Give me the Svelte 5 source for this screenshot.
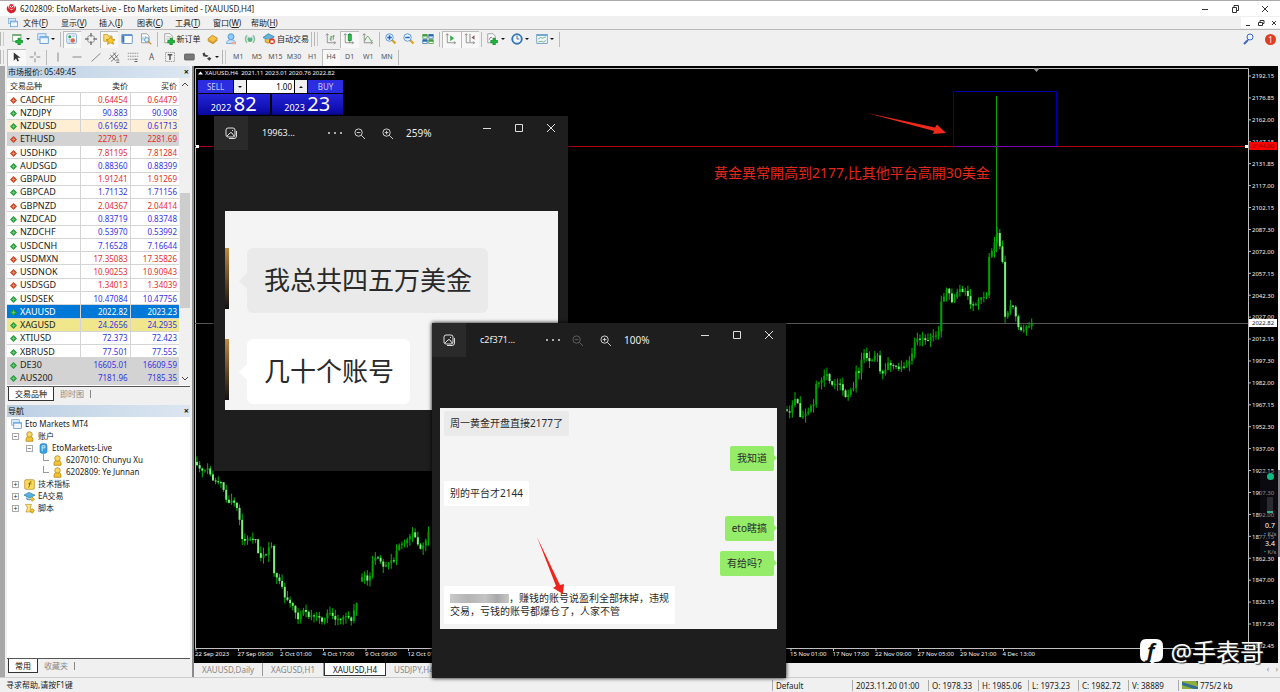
<script>
  // top menu: label and its access key
  const menus = [
    ["文件", "F"],
    ["显示", "V"],
    ["插入", "I"],
    ["图表", "C"],
    ["工具", "T"],
    ["窗口", "W"],
    ["帮助", "H"]
  ];

  // symbol, bid, ask, direction, row colour
  const quotes = [
    ["CADCHF", "0.64454", "0.64479", "down", ""],
    ["NZDJPY", "90.883", "90.908", "up", ""],
    ["NZDUSD", "0.61692", "0.61713", "up", "cream"],
    ["ETHUSD", "2279.17", "2281.69", "down", "grey"],
    ["USDHKD", "7.81195", "7.81284", "down", ""],
    ["AUDSGD", "0.88360", "0.88399", "up", ""],
    ["GBPAUD", "1.91241", "1.91269", "down", ""],
    ["GBPCAD", "1.71132", "1.71156", "up", ""],
    ["GBPNZD", "2.04367", "2.04414", "down", ""],
    ["NZDCAD", "0.83719", "0.83748", "up", ""],
    ["NZDCHF", "0.53970", "0.53992", "up", ""],
    ["USDCNH", "7.16528", "7.16644", "up", ""],
    ["USDMXN", "17.35083", "17.35826", "down", ""],
    ["USDNOK", "10.90253", "10.90943", "down", ""],
    ["USDSGD", "1.34013", "1.34039", "down", ""],
    ["USDSEK", "10.47084", "10.47756", "up", ""],
    ["XAUUSD", "2022.82", "2023.23", "up", "selected"],
    ["XAGUSD", "24.2656", "24.2935", "up", "khaki"],
    ["XTIUSD", "72.373", "72.423", "up", ""],
    ["XBRUSD", "77.501", "77.555", "up", ""],
    ["DE30", "16605.01", "16609.59", "up", "grey"],
    ["AUS200", "7181.96", "7185.35", "up", "grey"]
  ];

  const prices = [
    "2192.15", "2176.85", "2162.00", "2147.15", "2131.85", "2117.00", "2102.15",
    "2087.30", "2072.00", "2057.15", "2042.30", "2027.00", "2012.15", "1997.30",
    "1982.00", "1967.15", "1952.30", "1937.00", "1922.15", "1907.30", "1892.00",
    "1877.15", "1862.30", "1847.00", "1832.15", "1817.30", "1802.45"
  ];

  // slot on the time axis and its label
  const dates = [
    [0, "22 Sep 2023"],
    [1, "27 Sep 09:00"],
    [2, "2 Oct 01:00"],
    [3, "4 Oct 17:00"],
    [4, "9 Oct 09:00"],
    [5, "12 Oct 01:00"],
    [14, "15 Nov 01:00"],
    [15, "17 Nov 17:00"],
    [16, "22 Nov 09:00"],
    [17, "27 Nov 05:00"],
    [18, "29 Nov 21:00"],
    [19, "4 Dec 13:00"]
  ];

  // price path, split where the market gapped
  const runs = [
    [[196, 462], [200, 466], [205, 470], [211, 466], [213, 480], [223, 482], [229, 502], [235, 499], [240, 510], [244, 540], [249, 539], [257, 537], [261, 558], [268, 553], [273, 543], [276, 575], [282, 582], [287, 598], [293, 603], [300, 620], [306, 606], [310, 615], [320, 617], [325, 622], [330, 609], [338, 620], [347, 616], [353, 619], [357, 603], [359, 600]],
    [[361, 580], [365, 574], [370, 583], [374, 562], [378, 556], [385, 565], [390, 561], [397, 560], [399, 546], [408, 541], [415, 530], [421, 548], [426, 546], [429, 536], [432, 520]],
    [[786, 410], [792, 411], [796, 399], [799, 396], [800, 420], [805, 415], [809, 413], [812, 405], [815, 408], [817, 384], [822, 381], [830, 372], [832, 385], [842, 383], [848, 400], [851, 390], [855, 388], [857, 370], [862, 374], [864, 348], [867, 358], [873, 360], [880, 353], [882, 373], [886, 372], [890, 363], [897, 367], [907, 367], [913, 355], [917, 340], [923, 337], [927, 341], [933, 336], [940, 335], [943, 300], [949, 288], [954, 302], [960, 288], [968, 292], [972, 303], [977, 305], [982, 297], [989, 293], [991, 252], [995, 251], [998, 228], [1001, 245], [1004, 258], [1007, 320], [1013, 303], [1016, 308], [1021, 332], [1027, 327], [1034, 323]]
  ];

  function priceAt(run, x) {
    for (let i = 1; i < run.length; i++) {
      if (x <= run[i][0]) {
        const [x0, y0] = run[i - 1];
        const [x1, y1] = run[i];
        return y0 + ((y1 - y0) * (x - x0)) / (x1 - x0);
      }
    }
    return run[run.length - 1][1];
  }

  function wobble(n) {
    const v = Math.sin(n * 12.9898) * 43758.5453;
    return v - Math.floor(v);
  }

  let candles = [];
  for (const run of runs) {
    const end = run[run.length - 1][0];
    for (let x = run[0][0]; x + 2 < end; x += 2.66) {
      const open = priceAt(run, x) + wobble(x) * 3 - 1;
      const close = priceAt(run, x + 2.66) + wobble(x + 2.66) * 3 - 1;
      const top = Math.min(open, close);
      const bottom = Math.max(open, close);
      candles.push({
        x,
        top,
        height: Math.max(1, bottom - top),
        high: top - wobble(x + 1) * 7,
        low: bottom + wobble(x + 2) * 7,
        up: close < open
      });
    }
  }

  const axis = `<path d="M3 1v12h11M1 3l2-2 2 2M12 11l2 2-2 2" fill="none" stroke="#777"/>`;
  const page = (x) => `<path d="M${x} 1h7l3 3v9h-10z" fill="#fff" stroke="#888"/>`;
  const plus = `<path d="M8 7h3v3h3v3h-3v3h-3v-3h-3v-3h3z" fill="#20b83c" stroke="#0e8a25"/>`;
  const coin = `<path d="M1 8l6-5 7 4-6 6z" fill="#f3c243" stroke="#b57a14"/><path d="M1 9l7 4 6-5v2l-6 5-7-4z" fill="#d08f1c"/>`;
  const glass = (inner) => `<path d="M9 9l5 5" stroke="#d9a520" stroke-width="3"/><circle cx="6" cy="6" r="5" fill="#e6f3ff" stroke="#3e83c9"/><path d="${inner}" stroke="#2a66b8" stroke-width="2"/>`;

  const icons = {
    newChart: `<rect x="1" y="2" width="11" height="9" fill="#fff" stroke="#5b9a5b"/><path d="M1 3h11" stroke="#70b070" stroke-width="2"/>` + plus,
    profiles: `<rect x="1" y="1" width="11" height="8" fill="#d7eaff" stroke="#6c9dcc"/><rect x="4" y="5" width="11" height="9" fill="#eef6ff" stroke="#4b86c2"/><path d="M4 6h11" stroke="#7fb4e6" stroke-width="2"/>`,
    market: `<rect x="1" y="1" width="13" height="13" rx="2" fill="#f3f8ff" stroke="#6fa0d6"/><circle cx="5" cy="5" r="2" fill="#30a848"/><circle cx="9" cy="10" r="3" fill="#e06a4c"/><path d="M8 4h4M3 9h3M3 12h3" stroke="#7fa8d0"/>`,
    data: `<circle cx="8" cy="8" r="5" fill="none" stroke="#777"/><path d="M8 0v5M8 11v5M0 8h5M11 8h5" stroke="#777" stroke-width="2"/>`,
    navigator: `<path d="M1 2h5l1 2h5v7h-11z" fill="#ffdc72" stroke="#bd912b"/><path d="M10 5l2 3 4 1-3 2 1 4-4-2-4 2 1-4-3-2 4-1z" fill="#ffc928" stroke="#b98610"/>`,
    terminal: `<rect x="1" y="2" width="14" height="12" rx="1" fill="#fff" stroke="#4179b8"/><path d="M1 3h14" stroke="#5d93cf" stroke-width="2"/><path d="M3 4v9" stroke="#4179b8" stroke-width="3"/>`,
    tester: page(2) + `<path d="M4 5v5M7 4v6" stroke="#579ad0"/><circle cx="9" cy="9" r="3" fill="#dcefff" stroke="#4784bb"/><path d="M11 11l4 4" stroke="#cc9a30" stroke-width="2"/>`,
    order: page(1) + `<path d="M3 5h6M3 8h4" stroke="#999"/>` + plus,
    coin,
    cloud: `<circle cx="8" cy="5" r="4" fill="#8ecbfa" stroke="#3b86c9"/><path d="M2 14q0-5 6-5t6 5z" fill="#c6e3fb" stroke="#5b9bd5"/><path d="M9 12h5v3h-5z" fill="#e9a9a0"/>`,
    signal: `<path d="M4 3q-4 5 0 10M12 3q4 5 0 10" fill="none" stroke="#86bfa0" stroke-width="2"/><path d="M6 5q-2 3 0 6M10 5q2 3 0 6" fill="none" stroke="#6aa5d0"/><circle cx="8" cy="9" r="3" fill="#5bb47a"/>`,
    auto: `<path d="M0 6l7-5 8 4-7 5z" fill="#64b2dd" stroke="#2f7fae"/><path d="M3 8v4q4 3 7 0v-3" fill="#eebf49" stroke="#a97c18"/><circle cx="12" cy="11" r="4" fill="#e23a24"/><path d="M10 10h4v3h-4z" fill="#fff"/>`,
    bars: axis + `<path d="M6 8h2M8 4v7M8 5h2M11 3v6M11 4h2" stroke="#3c8a3c"/>`,
    candle: axis + `<path d="M9 0v13" stroke="#0a8a24"/><rect x="7" y="2" width="4" height="8" fill="#2cc04a" stroke="#0a8a24"/>`,
    line: axis + `<path d="M4 10q3-9 6-3t4 3" fill="none" stroke="#3c8a3c"/>`,
    zoomIn: glass("M3 6h6M6 3v6"),
    zoomOut: glass("M3 6h6"),
    tiles: `<path d="M1 2h6v5h-6z" fill="#fff" stroke="#3d9e38"/><path d="M9 2h6v5h-6z" fill="#fff" stroke="#2e6bb5"/><path d="M1 9h6v5h-6z" fill="#fff" stroke="#2e6bb5"/><path d="M9 9h6v5h-6z" fill="#fff" stroke="#3d9e38"/><path d="M1 3h6M9 10h6" stroke="#3d9e38" stroke-width="3"/><path d="M9 3h6M1 10h6" stroke="#2e6bb5" stroke-width="3"/>`,
    shift: axis + `<path d="M7 3l5 4-5 4z" fill="#2fae45"/>`,
    scroll: axis + `<path d="M8 1v11" stroke="#666"/><path d="M14 3v6l-4-3z" fill="#8a5a5a"/>`,
    indicator: page(1) + `<path d="M3 9q2-6 4-2" fill="none" stroke="#555"/>` + plus,
    clock: `<circle cx="8" cy="8" r="7" fill="#4484c8" stroke="#265f9f"/><circle cx="8" cy="8" r="5" fill="#f0f7ff"/><path d="M8 4v4h3" fill="none" stroke="#345"/>`,
    template: `<rect x="1" y="2" width="14" height="12" fill="#eef6fc" stroke="#5e90b8"/><path d="M1 3h14" stroke="#6ba6d4" stroke-width="2"/><path d="M3 8l3-2 3 1 4-2M3 12l4-1 3 1 3-2" fill="none" stroke="#5b9a5b"/>`,
    cursor: `<path d="M5 2v11l3-3 2 4 2-1-2-4h4z" fill="#333"/>`,
    cross: `<path d="M8 1v5M8 10v5M1 8h5M10 8h5" stroke="#666"/>`,
    vline: `<path d="M8 2v12" stroke="#666"/>`,
    hline: `<path d="M2 8h12" stroke="#666"/>`,
    trend: `<path d="M2 14l12-11" stroke="#666"/>`,
    channel: `<path d="M1 11l10-9M4 14l10-9M3 5l7 8M7 2l6 8" stroke="#555"/><path d="M11 12h4M11 15h4" stroke="#333"/>`,
    fib: `<path d="M1 3h14M1 7h14M1 11h8" stroke="#777" stroke-dasharray="2 1"/><path d="M10 11h4M10 14h4" stroke="#333"/>`,
    label: `<rect x="2" y="2" width="12" height="12" fill="none" stroke="#888" stroke-dasharray="2 1"/><path d="M5 5h6M8 5v7" stroke="#555" stroke-width="2"/>`,
    rect: `<rect x="2" y="4" width="13" height="8" rx="1" fill="#777" stroke="#555"/>`,
    arrows: `<path d="M2 3l3-1 1 3 4 1-2 2-5-1zM8 10l3-2 3 2-3 3z" fill="#444"/>`
  };

  const periods = ["M1", "M5", "M15", "M30", "H1", "H4", "D1", "W1", "MN"];
  const chartTabs = ["XAUUSD,Daily", "XAGUSD,H1", "XAUUSD,H4", "USDJPY,H4"];
  const bar = ["O: 1978.33", "H: 1985.06", "L: 1973.23", "C: 1982.72", "V: 38889"];

  let period = $state("H4");
  let volume = $state("1.00");
</script>

{#snippet icon(name)}
  <svg class="ico" viewBox="0 0 16 16" aria-hidden="true">{@html icons[name]}</svg>
{/snippet}

{#snippet tool(name, pressed)}
  <button class="tool" class:pressed aria-label={name}>{@render icon(name)}</button>
{/snippet}

{#snippet drop(name)}
  <button class="tool drop" aria-label={name}>{@render icon(name)}<i class="caret"></i></button>
{/snippet}

{#snippet person()}
  <svg class="ico" viewBox="0 0 16 16" aria-hidden="true">
    <path d="M3 15q-1-7 4-7h2q5 0 4 7z" fill="#f2c230" stroke="#a87a10" />
    <circle cx="8" cy="5" r="4" fill="#f8d860" stroke="#a87a10" />
  </svg>
{/snippet}

{#snippet photoHead(name, zoom, faint)}
  <header class="photo-head">
    <button class="photo-icon" aria-label="Gallery">
      <svg viewBox="0 0 12 12"><rect x="1" y="1" width="9" height="9" rx="2" /><path d="M2 9l3-3q1-1 2 0l2 3M11.500 4v5q0 2.500-2.500 2.500H4" /><path d="M7 3.500h1" /></svg>
    </button>
    <span class="photo-name">{name}</span>
    <button class="dots" aria-label="More"><i></i><i></i><i></i></button>
    <button class="lens" class:faint aria-label="Zoom out">
      <svg viewBox="0 0 12 12"><circle cx="5" cy="5" r="4" /><path d="M8 8l4 4M3 5h4" /></svg>
    </button>
    <button class="lens" aria-label="Zoom in">
      <svg viewBox="0 0 12 12"><circle cx="5" cy="5" r="4" /><path d="M8 8l4 4M3 5h4M5 3v4" /></svg>
    </button>
    <span class="photo-zoom">{zoom}</span>
    <div class="photo-ctl">
      <button aria-label="Minimize"><svg viewBox="0 0 8 8"><path d="M0 4.500h8" /></svg></button>
      <button aria-label="Maximize"><svg viewBox="0 0 8 8"><path d="M.5.5h7v7h-7z" /></svg></button>
      <button aria-label="Close"><svg viewBox="0 0 8 8"><path d="M0 0l8 8M8 0l-8 8" /></svg></button>
    </div>
  </header>
{/snippet}

<div class="app">
  <header class="title-bar">
    <svg class="logo" viewBox="0 0 12 12"><path d="M2 3q-3 4 1 7 4 3 7-1 2-3 0-6l-1 3-3 2-3-2z" fill="#d81e28" /><circle cx="6" cy="4" r="3" fill="#e8323a" /><path d="M4 3l2 2 3-3" fill="none" stroke="#fff" /></svg>
    <h1>6202809: EtoMarkets-Live - Eto Markets Limited - [XAUUSD,H4]</h1>
    <div class="win-ctl">
      <button aria-label="Minimize"><svg viewBox="0 0 8 8"><path d="M1 4.5h6" /></svg></button>
      <button aria-label="Restore"><svg viewBox="0 0 8 8"><path d="M1.500 2.500h4v5h-4zM3 2V.5h4.500v5H6" /></svg></button>
      <button aria-label="Close"><svg viewBox="0 0 8 8"><path d="M1 1l6 6M7 1l-6 6" /></svg></button>
    </div>
  </header>

  <nav class="menu-bar">
    {@render icon("profiles")}
    {#each menus as [label, key]}
      <button>{label}(<u>{key}</u>)</button>
    {/each}
    <div class="mdi-ctl">
      <button aria-label="Minimize chart"><svg viewBox="0 0 8 8"><path d="M2 6.500h4" /></svg></button>
      <button aria-label="Restore chart"><svg viewBox="0 0 8 8"><path d="M1.500 3.500h4v3h-4zM3 3V1.500h4v3H6" /></svg></button>
      <button aria-label="Close chart"><svg viewBox="0 0 8 8"><path d="M2 2l4 4M6 2l-4 4" /></svg></button>
    </div>
  </nav>

  <div class="toolbar">
    <i class="grip"></i>
    <div class="group two-drops">{@render drop("newChart")}{@render drop("profiles")}</div>
    <i class="sep"></i>
    <div class="group five">
      {@render tool("market", true)}{@render tool("data")}{@render tool("navigator", true)}{@render tool("terminal")}{@render tool("tester")}
    </div>
    <i class="sep"></i>
    <button class="tool wide">{@render icon("order")}新订单</button>
    <div class="group three">{@render tool("coin")}{@render tool("cloud")}{@render tool("signal")}</div>
    <button class="tool wide auto">{@render icon("auto")}自动交易</button>
    <i class="sep"></i>
    <i class="grip"></i>
    <div class="group three">{@render tool("bars")}{@render tool("candle", true)}{@render tool("line")}</div>
    <i class="sep"></i>
    <div class="group three">{@render tool("zoomIn")}{@render tool("zoomOut")}{@render tool("tiles")}</div>
    <i class="sep"></i>
    <div class="group two">{@render tool("shift", true)}{@render tool("scroll", true)}</div>
    <i class="sep"></i>
    <div class="group three-drops">{@render drop("indicator")}{@render drop("clock")}{@render drop("template")}</div>
    <i class="sep"></i>
    <div class="alerts">
      <button aria-label="Search"><svg viewBox="0 0 12 12"><path d="M1 11l4-4" stroke="#3c66c0" stroke-width="2" /><circle cx="7" cy="4" r="3" fill="#eef4ff" stroke="#3c66c0" /></svg></button>
      <button class="bell" aria-label="Notifications">1</button>
    </div>
  </div>

  <div class="toolbar second">
    <i class="grip"></i>
    <div class="group two">{@render tool("cursor", true)}{@render tool("cross")}</div>
    <i class="sep"></i>
    <div class="group nine">
      {@render tool("vline")}{@render tool("hline")}{@render tool("trend")}{@render tool("channel")}{@render tool("fib")}
      <button class="tool letter">A</button>
      {@render tool("label")}{@render tool("rect")}{@render drop("arrows")}
    </div>
    <i class="grip"></i>
    <div class="group periods">
      {#each periods as p}
        <button class="tool" class:pressed={p === period} onclick={() => (period = p)}>{p}</button>
      {/each}
    </div>
    <i class="sep"></i>
  </div>

  <main>
    <aside>
      <div class="panel-head"><span>市场报价: 05:49:45</span><button aria-label="Close">×</button></div>
      <div class="quotes">
        <table>
          <thead>
            <tr><th>交易品种</th><th>卖价</th><th>买价</th></tr>
          </thead>
          <tbody>
            {#each quotes as [symbol, bid, ask, dir, tint]}
              <tr class="{dir} {tint}">
                <td>
                  <svg viewBox="0 0 8 8"><path d="M4 0l4 4-4 4-4-4z" /><path d="M4 2v4M2 4h4" stroke="#fff" opacity=".4" /></svg>{symbol}
                </td>
                <td>{bid}</td>
                <td>{ask}</td>
              </tr>
            {/each}
          </tbody>
        </table>
        <div class="scroll">
          <svg viewBox="0 0 8 6"><path d="M1 5l3-3 3 3" /></svg>
          <i class="thumb"></i>
          <svg viewBox="0 0 8 6"><path d="M1 1l3 3 3-3" /></svg>
        </div>
      </div>
      <div class="tabs"><button class="on">交易品种</button><button>即时图</button><i></i></div>

      <div class="panel-head nav"><span>导航</span><button aria-label="Close">×</button></div>
      <ul class="tree">
        <li>{@render icon("profiles")}Eto Markets MT4</li>
        <li><i class="fold">−</i>{@render person()}账户</li>
        <li class="l1"><i class="fold">−</i><svg class="ico" viewBox="0 0 16 16"><rect x="3" y="1" width="10" height="14" rx="3" fill="#35a2e8" stroke="#1c78bd" /><path d="M6 4h4v3H6M6 4v8" fill="none" stroke="#fff" /></svg>EtoMarkets-Live</li>
        <li class="l2"><i class="branch"></i>{@render person()}6207010: Chunyu Xu</li>
        <li class="l2"><i class="branch"></i>{@render person()}6202809: Ye Junnan</li>
        <li><i class="fold">+</i><svg class="ico" viewBox="0 0 16 16"><rect x="1" y="1" width="14" height="14" rx="2" fill="#fbd95a" stroke="#b38820" /><path d="M11 4q-3-1-3 3v3q0 2-2 2M6 7h5" fill="none" stroke="#6a4e08" /></svg>技术指标</li>
        <li><i class="fold">+</i><svg class="ico" viewBox="0 0 16 16"><path d="M0 6l7-4 9 4-8 4z" fill="#59b1d9" stroke="#2b7fa8" /><path d="M4 9v3q4 2 6 0" fill="#8fd0ea" stroke="#2b7fa8" /><path d="M12 9l3 3-3 3-3-3z" fill="#f3c430" stroke="#b08015" /></svg>EA交易</li>
        <li><i class="fold">+</i><svg class="ico" viewBox="0 0 16 16"><path d="M2 2h9l-2 5 2 6H3l2-6z" fill="#fbe27c" stroke="#b59022" /><path d="M12 8l3 3-3 4-3-4z" fill="#f3c430" stroke="#b08015" /></svg>脚本</li>
      </ul>
      <div class="tabs"><button class="on">常用</button><button>收藏夹</button><i></i></div>
    </aside>

    <section class="chart">
      <svg class="plot" viewBox="194 66 1084 597" preserveAspectRatio="none">
        <path class="frame" d="M195.500 648V68.500H1248.500V648.500H195" />
        <path d="M1033 68h7l-3.500 4z" fill="#999" />
        <path class="bid-line" d="M195 323.500H1248" />
        {#each candles as c}
          <path class="wick" d="M{c.x + 1} {c.high}V{c.low}" />
          <rect class={c.up ? "up" : "down"} x={c.x} y={c.top} width="2" height={c.height} />
        {/each}
        <path class="spike" d="M996.500 96V252" />
        <path d="M195 146.500H1248" stroke="#b00010" />
        <path d="M953.500 146.500V91.500H1056.500V146.500" fill="none" stroke="#0000a8" />
        <path d="M953 146.500H1057" stroke="#7a00a8" />
        <path d="M196 145h3v3h-3zM1245 145h3v3h-3z" fill="#fff" />
        <path class="arrow" d="M867 113L935 127.500 937 124.500 946 133 933 134 934 131z" />
        {#each prices as p, i}
          <path class="frame" d="M1249 {76 + i * 21.92}h2" />
          <text x="1252" y={78.300 + i * 21.92}>{p}</text>
        {/each}
        <rect x="1249" y="142" width="28" height="8" fill="#f00" />
        <text x="1252" y="148.300" class="on-red">2144.00</text>
        <rect x="1249" y="319" width="28" height="8" fill="#fff" />
        <text x="1252" y="325.300" class="on-white">2022.82</text>
        {#each dates as [slot, label]}
          <path class="frame" d="M{196 + slot * 42.5} 648v3" />
          <text x={195 + slot * 42.5} y="656">{label}</text>
        {/each}
        <text x="205" y="75">XAUUSD,H4&nbsp; 2021.11 2023.01 2020.76 2022.82</text>
        <path d="M198 74.500h5l-2.500-3z" fill="#fff" />
        <text x="714" y="178" class="remark">黃金異常開高到2177,比其他平台高開30美金</text>
      </svg>

      <div class="deal">
        <div class="deal-top">
          <button class="side">SELL</button>
          <button class="step" aria-label="Less"><i class="caret"></i></button>
          <input aria-label="Volume" bind:value={volume} />
          <button class="step" aria-label="More"><i class="caret flip"></i></button>
          <button class="side">BUY</button>
        </div>
        <div class="deal-rates">
          <button>2022 <b>82</b></button>
          <button>2023 <b>23</b></button>
        </div>
      </div>

      <div class="net">
        <i class="dot"></i>
        <i class="gauge"></i>
        <b>0.7</b>
        <span><em>•</em> K/s</span>
        <b>3.4</b>
        <span class="green"><em>•</em> K/s</span>
      </div>

      <div class="chart-tabs">
        {#each chartTabs as t}
          <button class:on={t === "XAUUSD,H4"}>{t}</button>
        {/each}
        <span class="pager">‹ &nbsp; ›</span>
      </div>
    </section>
  </main>

  <footer>
    <span class="help">寻求帮助,请按F1键</span>
    <span class="cell profile">Default</span>
    <span class="cell time">2023.11.20 01:00</span>
    {#each bar as value}
      <span class="cell">{value}</span>
    {/each}
    <span class="cell traffic">
      <svg viewBox="0 0 16 8"><path d="M0 0h16v8H0z" fill="#2f6f8f" /><path d="M0 0h14l2 5v1L0 1zM0 4l12 4H0z" fill="#8fae3c" /></svg>775/2 kb
    </span>
  </footer>

  <div class="photo first">
    {@render photoHead("19963...", "259%", false)}
    <div class="shot">
      <div class="line"><i class="avatar"></i><p class="grey">我总共四五万美金</p></div>
      <div class="line"><i class="avatar"></i><p>几十个账号</p></div>
    </div>
  </div>

  <div class="photo second-photo">
    {@render photoHead("c2f371...", "100%", true)}
    <div class="shot chat">
      <p class="grey">周一黄金开盘直接2177了</p>
      <p class="mine">我知道</p>
      <p>别的平台才2144</p>
      <p class="mine">eto瞎搞</p>
      <p class="mine">有给吗？</p>
      <p class="long"><i class="mosaic"></i>，赚钱的账号说盈利全部抹掉，违规交易，亏钱的账号都爆仓了，人家不管</p>
      <svg class="pointer" viewBox="0 0 28 58"><path d="M0 0L19 49 16 51 26 57 27 47 23 48z" fill="#f0241c" /></svg>
    </div>
  </div>

  <div class="brand">
    <svg viewBox="0 0 26 28"><path d="M7 1h10q7 0 7 7v9q0 7-7 7h-1l-5 3 1-3H7q-6 0-6-7V8q0-7 6-7z" fill="#fff" /><text x="8" y="20">f</text></svg>
    @手表哥
  </div>
</div>

<style>
  :global(body) {
    margin: 0;
    background: #f0f0f0;
  }

  .app {
    position: relative;
    display: flex;
    flex-direction: column;
    min-height: 100vh;
    box-sizing: border-box;
    border-top: 1px solid #a9a9ab;
    overflow: hidden;
    font: 8px/12px "Noto Sans", "Noto Sans CJK SC", sans-serif;
    color: #222;
  }

  button {
    padding: 0;
    border: 0;
    background: none;
    font: inherit;
    color: inherit;
  }

  svg {
    display: block;
    flex: none;
  }

  .ico {
    width: 12px;
    height: 12px;
  }

  /* title and menu */
  .title-bar {
    display: flex;
    align-items: center;
    height: 15px;
    padding-left: 6px;
    gap: 3px;
    background: #fff;
  }

  .logo {
    width: 11px;
    height: 11px;
  }

  h1 {
    margin: 0;
    font-size: 8px;
    font-weight: normal;
  }

  .win-ctl,
  .mdi-ctl {
    display: flex;
    margin-left: auto;
  }

  .win-ctl button {
    display: grid;
    place-items: center;
    width: 30px;
    height: 15px;
  }

  .win-ctl svg,
  .mdi-ctl svg {
    width: 8px;
    height: 8px;
    fill: none;
    stroke: #333;
  }

  .menu-bar {
    display: flex;
    align-items: center;
    height: 13px;
    padding-left: 8px;
    border-bottom: 1px solid #b8b8b8;
  }

  .menu-bar > .ico {
    width: 10px;
    height: 10px;
    margin-right: 5px;
  }

  .menu-bar > button {
    width: 38px;
    text-align: left;
    white-space: nowrap;
  }

  .mdi-ctl button {
    width: 13px;
    height: 11px;
    display: grid;
    place-items: center;
    background: #fff;
  }

  /* toolbars */
  .toolbar {
    display: flex;
    align-items: center;
    height: 18px;
  }

  .second {
    color: #555;
    font-size: 7px;
  }

  .grip {
    width: 2px;
    height: 14px;
    margin-right: 4px;
    border-left: 1px solid #b5b5b5;
    border-right: 1px solid #c9c9c9;
  }

  .second .grip {
    margin-right: 3px;
  }

  .sep {
    width: 0;
    height: 15px;
    margin: 0 2px;
    border-left: 1px solid #bbb;
  }

  .group {
    display: flex;
    height: 17px;
  }

  .two-drops {
    width: 50px;
  }

  .five {
    width: 92px;
  }

  .three {
    width: 55px;
  }

  .two {
    width: 37px;
  }

  .three-drops {
    width: 73px;
  }

  .nine {
    width: 173px;
  }

  .periods {
    width: 167px;
  }

  .tool {
    flex: 1;
    display: flex;
    align-items: center;
    justify-content: center;
    height: 17px;
  }

  .letter {
    font-size: 8px;
  }

  .wide {
    flex: none;
    width: 44px;
    gap: 1px;
    white-space: nowrap;
  }

  .auto {
    width: 50px;
    gap: 2px;
    justify-content: flex-end;
  }

  .pressed {
    background: #f8f8f8;
    box-shadow: inset 1px 1px #bbb;
  }

  .drop {
    gap: 2px;
  }

  .nine .drop {
    flex: none;
    width: 24px;
  }

  .caret {
    border: 2px solid transparent;
    border-top-color: #111;
    border-bottom: 0;
  }

  .flip {
    border-top: 0;
    border-bottom: 2px solid #111;
  }

  .alerts {
    display: flex;
    gap: 10px;
    align-items: center;
    margin-left: auto;
    padding-right: 4px;
  }

  .alerts svg {
    width: 12px;
    height: 12px;
  }

  .bell {
    width: 11px;
    height: 11px;
    border-radius: 6px;
    background: #e23c20;
    color: #fff;
    line-height: 11px;
  }

  /* left panels */
  main {
    display: flex;
    flex: 1;
  }

  aside {
    display: flex;
    flex-direction: column;
    width: 183px;
    padding: 0 2px 4px 2px;
    border-left: 5px solid #a8a8a8;
    border-right: 2px solid #8a8a8a;
  }

  .panel-head {
    display: flex;
    justify-content: space-between;
    align-items: center;
    height: 12px;
    padding: 0 1px;
    background: linear-gradient(90deg, #bcd0e4, #dce6f1);
    color: #111;
  }

  .panel-head button {
    font-weight: bold;
    font-size: 9px;
  }

  .nav {
    margin-top: 4px;
  }

  .quotes {
    display: flex;
    padding-bottom: 1px;
    background: #fff;
    border-bottom: 1px solid #555;
  }

  table {
    flex: 1;
    height: 307px;
    border-collapse: collapse;
    table-layout: fixed;
    line-height: 11px;
  }

  th {
    height: 14px;
    font-weight: normal;
  }

  th,
  td {
    padding: 0 2px;
    border-bottom: 1px solid #d4d4d4;
    text-align: right;
  }

  th:first-child,
  td:first-child {
    width: 68px;
    padding: 0 2px 0 3px;
    text-align: left;
  }

  td:first-child {
    font-size: 9px;
  }

  td + td {
    border-left: 1px solid #d4d4d4;
  }

  td svg {
    display: inline-block;
    width: 7px;
    height: 7px;
    margin-right: 3px;
    vertical-align: -1px;
  }

  .up td {
    color: #3434e6;
  }

  .down td {
    color: #e82c2c;
  }

  .up td:first-child,
  .down td:first-child {
    color: #222;
  }

  tr.up svg {
    fill: #1fa035;
  }

  tr.down svg {
    fill: #cc4420;
  }

  .cream {
    background: #fdeed4;
  }

  .grey {
    background: #d3d3d3;
  }

  .khaki {
    background: #f0e68c;
  }

  .selected {
    background: #0078d7;
  }

  .selected td,
  .selected td:first-child {
    color: #fff;
  }

  .scroll {
    display: flex;
    flex-direction: column;
    align-items: center;
    width: 11px;
    background: #f0f0f0;
  }

  .scroll svg {
    width: 8px;
    height: 6px;
    margin: 3px 0;
    fill: none;
    stroke: #444;
  }

  .thumb {
    width: 10px;
    height: 115px;
    margin: auto 0 65px;
    background: #cdcdcd;
  }

  .tabs {
    display: flex;
    align-items: center;
    height: 14px;
    padding-left: 1px;
    color: #888;
  }

  .tabs button {
    height: 14px;
    padding: 0 6px;
  }

  .tabs .on {
    border: 1px solid #333;
    border-top: 0;
    background: #fff;
    color: #111;
  }

  .tabs i {
    height: 8px;
    border-left: 1px solid #888;
  }

  .tree {
    flex: 1;
    margin: 0;
    padding: 1px 0 0 4px;
    border-bottom: 1px solid #555;
    background: #fff;
    list-style: none;
  }

  .tree li {
    display: flex;
    align-items: center;
    gap: 3px;
    height: 12px;
    white-space: nowrap;
  }

  .tree .ico {
    width: 11px;
    height: 11px;
  }

  .tree .l1 {
    padding-left: 14px;
  }

  .tree .l2 {
    padding-left: 32px;
  }

  .fold {
    box-sizing: border-box;
    width: 7px;
    height: 7px;
    margin: 0 2px 0 1px;
    border: 1px solid #aaa;
    font: 7px/5px "Noto Sans", sans-serif;
    text-align: center;
  }

  .branch {
    width: 5px;
    height: 6px;
    margin-bottom: 6px;
    border-left: 1px solid #999;
    border-bottom: 1px solid #999;
  }

  /* chart */
  .chart {
    position: relative;
    display: flex;
    flex-direction: column;
    flex: 1;
    min-width: 0;
    padding-right: 2px;
  }

  .plot {
    width: 100%;
    flex: 1;
    background: #000;
  }

  .plot text {
    fill: #f2f2f2;
    font-size: 6px;
  }

  .plot .remark {
    font: 14px "Noto Sans", "Noto Sans CJK TC", sans-serif;
    fill: #e3271b;
  }

  .plot .on-red {
    fill: #7a0000;
  }

  .plot .on-white {
    fill: #222;
  }

  .frame {
    fill: none;
    stroke: #c0c0c0;
  }

  .bid-line {
    stroke: #555;
  }

  .wick {
    stroke: #00b400;
  }

  .spike {
    stroke: #00a800;
  }

  .up {
    fill: #00a000;
  }

  .down {
    fill: #7df07d;
  }

  .arrow {
    fill: #ee2a1c;
  }

  .deal {
    position: absolute;
    left: 4px;
    top: 14px;
    width: 145px;
    color: #fff;
    font-size: 9px;
  }

  .deal-top,
  .deal-rates {
    display: flex;
    gap: 1px;
  }

  .deal-rates {
    margin-top: 1px;
    gap: 2px;
  }

  .side {
    flex: 1;
    background: #2c2ce0;
    color: #c9c9ff;
    font-size: 8px;
  }

  .step {
    display: grid;
    place-items: center;
    width: 12px;
    background: #f0f0f0;
  }

  .deal input {
    box-sizing: border-box;
    width: 47px;
    height: 13px;
    padding: 0 2px;
    border: 0;
    font: inherit;
    font-size: 8px;
    text-align: right;
  }

  .deal-rates button {
    flex: 1;
    height: 21px;
    background: linear-gradient(#2424d8, #0808a0);
    line-height: 20px;
  }

  .deal-rates b {
    font-size: 20px;
    font-weight: normal;
  }

  .net {
    position: absolute;
    right: 0;
    top: 404px;
    display: flex;
    flex-direction: column;
    align-items: center;
    width: 20px;
    background: rgba(20, 20, 32, 0.5);
    color: #999;
    font-size: 6px;
    line-height: 9px;
  }

  .net b {
    color: #fff;
    font-size: 7px;
    font-weight: normal;
  }

  .net em {
    color: #3a90e0;
  }

  .net .green em {
    color: #18b070;
  }

  .dot {
    width: 7px;
    height: 7px;
    margin: 3px 0 17px;
    border-radius: 4px;
    background: #10b981;
  }

  .gauge {
    width: 6px;
    height: 14px;
    margin-bottom: 8px;
    border-bottom: 2px solid #2cb090;
    background: #2a2a30;
  }

  .chart-tabs {
    display: flex;
    height: 14px;
    color: #888;
  }

  .chart-tabs button {
    height: 13px;
    padding: 0 8px;
    line-height: 13px;
    border-right: 1px solid #999;
  }

  .chart-tabs .on {
    border: 1px solid #333;
    border-top: 0;
    background: #fff;
    color: #111;
  }

  .pager {
    margin-left: auto;
  }

  footer {
    display: flex;
    align-items: center;
    height: 14px;
    padding-left: 6px;
    border-top: 1px solid #ccc;
  }

  .help {
    flex: 1;
  }

  .cell {
    box-sizing: border-box;
    width: 50px;
    padding: 0 3px;
    border-left: 1px solid #aaa;
    line-height: 11px;
    white-space: nowrap;
  }

  .profile {
    width: 80px;
  }

  .time {
    width: 76px;
  }

  .traffic {
    display: flex;
    align-items: center;
    gap: 2px;
    width: 102px;
  }

  .traffic svg {
    width: 16px;
    height: 8px;
  }

  /* photo viewers floating over the terminal */
  .photo {
    position: absolute;
    width: 354px;
    height: 355px;
    background: #1e1e1e;
    box-shadow: 0 0 4px #000;
    color: #eee;
    font-size: 9px;
  }

  .first {
    left: 214px;
    top: 115px;
  }

  .second-photo {
    left: 432px;
    top: 322px;
  }

  .photo-head {
    display: flex;
    align-items: center;
    height: 34px;
  }

  .photo-head svg {
    fill: none;
    stroke: #ddd;
  }

  .photo-icon {
    display: grid;
    place-items: center;
    width: 34px;
    height: 34px;
    background: #2a2a2a;
  }

  .photo-icon svg {
    width: 12px;
    height: 12px;
  }

  .photo-name {
    width: 66px;
    padding-left: 14px;
  }

  .photo-zoom {
    font-size: 10px;
  }

  .dots {
    display: flex;
    gap: 4px;
    width: 26px;
  }

  .dots i {
    width: 2px;
    height: 2px;
    border-radius: 1px;
    background: #ddd;
  }

  .lens {
    width: 28px;
  }

  .lens + .lens {
    width: 24px;
  }

  .lens svg {
    width: 11px;
    height: 11px;
  }

  .faint {
    opacity: 0.35;
  }

  .photo-ctl {
    display: flex;
    align-self: flex-start;
    gap: 24px;
    margin: 8px 13px 0 auto;
  }

  .photo-ctl svg {
    width: 8px;
    height: 8px;
  }

  .shot {
    position: relative;
    display: flex;
    flex-direction: column;
    box-sizing: border-box;
    margin: 61px 10px 0 11px;
    padding: 37px 0 6px;
    gap: 26px;
    background: #f4f4f4;
    color: #2a2a2a;
  }

  .line {
    display: flex;
    gap: 18px;
  }

  .avatar {
    width: 4px;
    height: 61px;
    background: linear-gradient(#c08a40, #5a4020 60%, #111);
  }

  .shot p {
    position: relative;
    margin: 0;
    padding: 0 16px 0 17px;
    border-radius: 6px;
    background: #fff;
    font-size: 26px;
    line-height: 65px;
  }

  .shot p.grey {
    background: #eaeaea;
  }

  .line p::before {
    content: "";
    position: absolute;
    left: -8px;
    top: 25px;
    border: 8px solid transparent;
    border-left: 0;
    border-right-color: #fff;
  }

  .line p.grey::before {
    border-right-color: #eaeaea;
  }

  .chat {
    align-items: flex-start;
    gap: 10px;
    margin: 51px 9px 0 8px;
    padding: 3px 3px 5px 4px;
  }

  .chat p {
    padding: 0 6px;
    border-radius: 2px;
    font-size: 10px;
    line-height: 25px;
  }

  .chat .mine {
    align-self: flex-end;
    padding: 0 7px;
    background: #95ec69;
  }

  .chat .mine::after {
    content: "";
    position: absolute;
    right: -3px;
    top: 9px;
    border: 3px solid transparent;
    border-right: 0;
    border-left-color: #95ec69;
  }

  .chat .long {
    width: 219px;
    padding: 6px;
    line-height: 13px;
  }

  .mosaic {
    display: inline-block;
    width: 59px;
    height: 9px;
    vertical-align: -1px;
    background: linear-gradient(90deg, #c9c9c9, #b4b4b4 30%, #c4c4c4 60%, #a8a8a8 80%, #c8c8c8);
  }

  .pointer {
    position: absolute;
    left: 97px;
    top: 129px;
    width: 28px;
    height: 58px;
  }

  .brand {
    position: absolute;
    right: 16px;
    bottom: 24px;
    display: flex;
    align-items: center;
    gap: 5px;
    color: #fff;
    font: 24px/32px "Noto Sans", "Noto Sans CJK SC", sans-serif;
    text-shadow: 1px 1px 1px #444;
  }

  .brand svg {
    width: 26px;
    height: 28px;
  }

  .brand text {
    fill: #111;
    font: italic bold 20px "Noto Sans", sans-serif;
    text-shadow: none;
  }
</style>
